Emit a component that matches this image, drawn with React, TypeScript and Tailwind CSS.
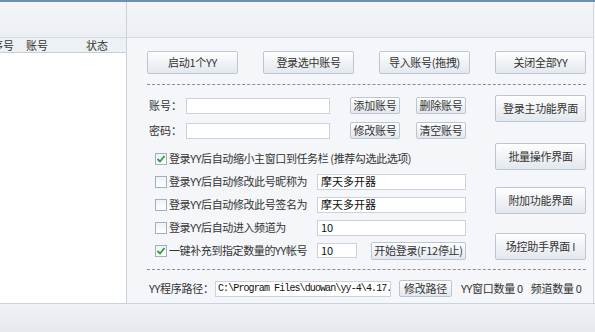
import React from "react";

const font = { fontFamily: '"Noto Sans CJK SC", "Noto Sans", sans-serif' };

function Btn({ children, className = "" }: { children: React.ReactNode; className?: string }) {
  return (
    <div
      className={
        "flex items-center justify-center whitespace-nowrap rounded-[2px] border border-[#b9c6d3] bg-linear-to-b from-[#fdfefe] to-[#e3e8ee] text-[11px] leading-none tracking-[-0.3px] text-[#333] shadow-[inset_0_1px_0_#ffffff] " +
        className
      }
    >
      {children}
    </div>
  );
}

function Input({ value = "", className = "" }: { value?: string; className?: string }) {
  return (
    <div
      className={
        "flex items-center overflow-hidden whitespace-nowrap border border-[#c9d3dd] bg-white pl-[3px] text-[11px] leading-none text-[#111] " +
        className
      }
    >
      {value}
    </div>
  );
}

function Check({ checked }: { checked?: boolean }) {
  return (
    <div className="flex h-[12px] w-[12px] shrink-0 items-center justify-center border border-[#9fb0c2] bg-linear-to-b from-[#eef2f5] to-white">
      {checked && (
        <svg width="10" height="10" viewBox="0 0 10 10">
          <path d="M1.5 5 L4 7.5 L8.5 2" fill="none" stroke="#2f9a3a" strokeWidth="1.8" />
        </svg>
      )}
    </div>
  );
}

function CheckRow({
  checked,
  label,
  children,
}: {
  checked?: boolean;
  label: string;
  children?: React.ReactNode;
}) {
  return (
    <div className="flex h-[23px] items-center">
      <div className="ml-[8px]">
        <Check checked={checked} />
      </div>
      <span className="ml-[2px] whitespace-nowrap text-[11px] leading-none tracking-[-0.4px] text-[#333]">{label}</span>
      {children}
    </div>
  );
}

export default function App() {
  return (
    <div className="flex h-[332px] w-[595px] flex-col overflow-hidden bg-[#f4f6f9]" style={font}>
      <div className="h-[2px] bg-[#6d8fb4]" />
      <div className="flex h-[302px] border-b border-[#c9d3dc]">
        {/* left panel */}
        <div className="flex w-[127px] flex-col border-r border-[#c8d2dc]">
          <div className="h-[36px] border-b border-[#d3dbe3] bg-linear-to-b from-[#f3f5f8] to-[#eceff3]" />
          <div className="flex h-[15px] items-center whitespace-nowrap border-b border-[#c5cfd9] bg-[#eef1f4] text-[11px] leading-none text-[#333]">
            <span className="ml-[-8px]">序号</span>
            <span className="ml-[12px]">账号</span>
            <span className="ml-[38px]">状态</span>
          </div>
          <div className="flex-1 bg-white" />
        </div>
        {/* right panel */}
        <div className="mr-[1px] flex flex-1 flex-col border-r border-[#d0d8e0]">
          <div className="h-[36px] border-b border-[#d3dbe3] bg-linear-to-b from-[#f3f5f8] to-[#eceff3]" />
          <div className="ml-[20px] flex w-[439px] flex-col">
            <div className="mt-[13px] flex justify-between">
              <Btn className="h-[23px] w-[91px]">启动1个YY</Btn>
              <Btn className="h-[23px] w-[91px]">登录选中账号</Btn>
              <Btn className="h-[23px] w-[91px]">导入账号(拖拽)</Btn>
              <Btn className="h-[23px] w-[91px]">关闭全部YY</Btn>
            </div>
            <div className="mt-[10px] border-t border-dashed border-[#8a8f96]" />
            <div className="mt-[10px] flex">
              <div className="flex w-[319px] flex-col pt-[2px]">
                <div className="flex h-[17px] items-center">
                  <span className="ml-[2px] w-[37px] whitespace-nowrap text-[11px] leading-none text-[#333]">账号：</span>
                  <Input className="h-[16px] w-[144px]" />
                  <Btn className="ml-[20px] h-[17px] w-[50px]">添加账号</Btn>
                  <Btn className="ml-[16px] h-[17px] w-[50px]">删除账号</Btn>
                </div>
                <div className="mt-[8px] flex h-[17px] items-center">
                  <span className="ml-[2px] w-[37px] whitespace-nowrap text-[11px] leading-none text-[#333]">密码：</span>
                  <Input className="h-[16px] w-[144px]" />
                  <Btn className="ml-[20px] h-[17px] w-[50px]">修改账号</Btn>
                  <Btn className="ml-[16px] h-[17px] w-[50px]">清空账号</Btn>
                </div>
                <div className="mt-[8px] flex flex-col">
                  <CheckRow checked label="登录YY后自动缩小主窗口到任务栏 (推荐勾选此选项)" />
                  <CheckRow label="登录YY后自动修改此号昵称为">
                    <div className="flex-1" />
                    <Input value="摩天多开器" className="h-[16px] w-[149px]" />
                  </CheckRow>
                  <CheckRow label="登录YY后自动修改此号签名为">
                    <div className="flex-1" />
                    <Input value="摩天多开器" className="h-[16px] w-[149px]" />
                  </CheckRow>
                  <CheckRow label="登录YY后自动进入频道为">
                    <div className="flex-1" />
                    <Input value="10" className="h-[16px] w-[149px]" />
                  </CheckRow>
                  <CheckRow checked label="一键补充到指定数量的YY帐号">
                    <div className="flex-1" />
                    <Input value="10" className="h-[15px] w-[40px]" />
                    <Btn className="ml-[14px] h-[18px] w-[95px]">开始登录(F12停止)</Btn>
                  </CheckRow>
                </div>
              </div>
              <div className="ml-[29px] flex w-[91px] flex-col">
                <Btn className="h-[27px]">登录主功能界面</Btn>
                <Btn className="mt-[21px] h-[27px]">批量操作界面</Btn>
                <Btn className="mt-[17px] h-[27px]">附加功能界面</Btn>
                <Btn className="mt-[19px] h-[27px]">场控助手界面 I</Btn>
              </div>
            </div>
            <div className="mt-[7px] border-t border-dashed border-[#8a8f96]" />
            <div className="mt-[10px] flex h-[17px] items-center">
              <span className="ml-[2px] w-[66px] whitespace-nowrap text-[11px] leading-none tracking-[-0.3px] text-[#333]">YY程序路径：</span>
              <div
                className="flex h-[16px] w-[176px] items-center overflow-hidden whitespace-nowrap border border-[#c9d3dd] bg-white pl-[2px] text-[10px] leading-none tracking-[-0.9px] text-[#111]"
                style={{ fontFamily: '"Liberation Mono", monospace' }}
              >
                C:\Program Files\duowan\yy-4\4.17.
              </div>
              <Btn className="ml-[8px] h-[17px] w-[53px]">修改路径</Btn>
              <span className="ml-[9px] whitespace-nowrap text-[11px] leading-none tracking-[-0.3px] text-[#333]">YY窗口数量 0</span>
              <span className="ml-[8px] whitespace-nowrap text-[11px] leading-none tracking-[-0.3px] text-[#333]">频道数量 0</span>
            </div>
          </div>
        </div>
      </div>
      <div className="flex-1 bg-linear-to-b from-[#eff2f5] to-[#e6eaee]" />
    </div>
  );
}
